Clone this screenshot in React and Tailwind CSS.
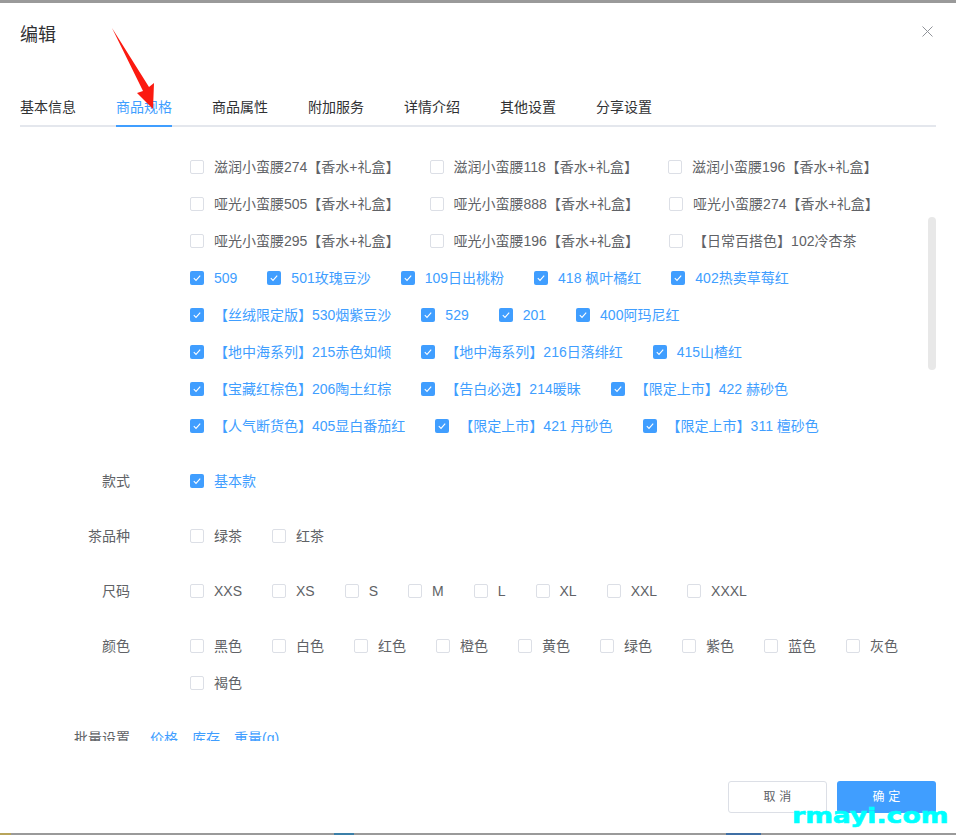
import React from "react";

const specs = [
  ["滋润小蛮腰274【香水+礼盒】", false],
  ["滋润小蛮腰118【香水+礼盒】", false],
  ["滋润小蛮腰196【香水+礼盒】", false],
  ["哑光小蛮腰505【香水+礼盒】", false],
  ["哑光小蛮腰888【香水+礼盒】", false],
  ["哑光小蛮腰274【香水+礼盒】", false],
  ["哑光小蛮腰295【香水+礼盒】", false],
  ["哑光小蛮腰196【香水+礼盒】", false],
  ["【日常百搭色】102冷杏茶", false],
  ["509", true],
  ["501玫瑰豆沙", true],
  ["109日出桃粉", true],
  ["418 枫叶橘红", true],
  ["402热卖草莓红", true],
  ["【丝绒限定版】530烟紫豆沙", true],
  ["529", true],
  ["201", true],
  ["400阿玛尼红", true],
  ["【地中海系列】215赤色如倾", true],
  ["【地中海系列】216日落绯红", true],
  ["415山楂红", true],
  ["【宝藏红棕色】206陶土红棕", true],
  ["【告白必选】214暖昧", true],
  ["【限定上市】422 赫砂色", true],
  ["【人气断货色】405显白番茄红", true],
  ["【限定上市】421 丹砂色", true],
  ["【限定上市】311 檀砂色", true],
];

const tabs = ["基本信息", "商品规格", "商品属性", "附加服务", "详情介绍", "其他设置", "分享设置"];

const groups = [
  { label: "款式", items: [["基本款", true]] },
  { label: "茶品种", items: [["绿茶", false], ["红茶", false]] },
  { label: "尺码", items: ["XXS", "XS", "S", "M", "L", "XL", "XXL", "XXXL"].map((s) => [s, false]) },
  { label: "颜色", items: ["黑色", "白色", "红色", "橙色", "黄色", "绿色", "紫色", "蓝色", "灰色", "褐色"].map((s) => [s, false]) },
];

const Check = ({ text, checked }) => (
  <label className="flex h-[37px] items-center mr-[30px] whitespace-pre">
    {checked ? (
      <span className="w-[14px] h-[14px] rounded-[2px] bg-[#409eff] flex items-center justify-center">
        <svg width="14" height="14" viewBox="0 0 14 14" fill="none">
          <path d="M3.8 7.2 L6 9.4 L10.2 4.6" stroke="#fff" strokeWidth="1.1" />
        </svg>
      </span>
    ) : (
      <span className="w-[14px] h-[14px] rounded-[2px] border border-[#dcdfe6] bg-white" />
    )}
    <span className={checked ? "pl-[10px] text-[#409eff]" : "pl-[10px] text-[#606266]"}>{text}</span>
  </label>
);

const FormRow = ({ label, children }) => (
  <div className="flex mb-[18px]">
    <div className="w-[110px] h-[37px] text-right leading-[39px] text-[#606266]">{label}</div>
    <div className="ml-[20px] flex-1 flex flex-wrap">{children}</div>
  </div>
);

export default function App() {
  return (
    <div
      className="relative w-[956px] h-[835px] overflow-hidden bg-[#9a9a9a] pt-[3px] text-sm"
      style={{ fontFamily: '"Liberation Sans", "Noto Sans CJK SC", sans-serif' }}
    >
      <div className="relative h-[830px] bg-white flex flex-col">
        {/* 标题 */}
        <div className="px-5 pt-5 flex justify-between">
          <h2 className="text-lg leading-6 text-[#303133]">编辑</h2>
          <svg className="mt-[3px] mr-[3px]" width="11" height="11" viewBox="0 0 11 11" fill="none">
            <path d="M0.5 0.5 L10.5 10.5 M10.5 0.5 L0.5 10.5" stroke="#909399" strokeWidth="1" />
          </svg>
        </div>

        {/* tab */}
        <div className="mx-5 mt-[38px] flex gap-10 border-b-2 border-[#e4e7ed]">
          {tabs.map((t, i) => (
            <div
              key={t}
              className={
                i === 1
                  ? "h-10 leading-[44px] -mb-[2px] border-b-2 border-[#409eff] box-content text-[#409eff]"
                  : "h-10 leading-[44px] text-[#303133]"
              }
            >
              {t}
            </div>
          ))}
        </div>

        {/* 表单 */}
        <div className="h-[614px] overflow-hidden pt-[21px] pl-5">
          <div className="w-[920px]">
            <FormRow label="">
              <div className="pl-10 flex flex-wrap">
                {specs.map(([t, c]) => (
                  <Check key={t} text={t} checked={c} />
                ))}
              </div>
            </FormRow>
            {groups.map((g) => (
              <FormRow key={g.label} label={g.label}>
                <div className="pl-10 flex flex-wrap">
                  {g.items.map(([t, c]) => (
                    <Check key={t} text={t} checked={c} />
                  ))}
                </div>
              </FormRow>
            ))}
            <FormRow label="批量设置">
              <div className="flex gap-[14px] h-[37px] leading-[39px] text-[#409eff]">
                <span>价格</span>
                <span>库存</span>
                <span>重量(g)</span>
              </div>
            </FormRow>
          </div>
        </div>

        {/* 底部按钮 */}
        <div className="pt-10 pr-5 flex justify-end gap-[10px]">
          <button className="w-[99px] h-8 rounded-[3px] border border-[#dcdfe6] bg-white text-xs tracking-[0.3px] text-[#606266]">
            取 消
          </button>
          <button className="w-[99px] h-8 rounded-[3px] bg-[#409eff] text-xs tracking-[0.3px] text-white">
            确 定
          </button>
        </div>

        {/* 滚动条 */}
        <div className="absolute left-[928px] top-[214px] w-2 h-[153px] rounded bg-[#e8e8e8]" />
      </div>

      {/* 页面露出的底部 */}
      <div className="absolute left-0 top-[833px] w-[11px] h-[2px] bg-[#b8a45a]" />
      <div className="absolute left-[334px] top-[833px] w-5 h-[2px] bg-[#3b7fa8]" />
      <div className="absolute left-[726px] top-[833px] w-[35px] h-[2px] bg-[#3f6fa5]" />

      {/* 红色箭头 */}
      <svg className="absolute left-0 top-0 pointer-events-none" width="200" height="120" viewBox="0 0 200 120">
        <polygon points="112,28 149,87 154,83 153,109 137,93 143,91" fill="#fb1a10" />
      </svg>

      {/* 水印 */}
      <div
        className="absolute left-[792px] top-[801px] text-[22px] leading-[30px] font-bold text-[#00ffff] scale-x-[1.21] origin-left [-webkit-text-stroke:0.6px_#00ffff]"
        style={{ fontFamily: '"DejaVu Sans", sans-serif' }}
      >
        rmayi.com
      </div>
    </div>
  );
}
